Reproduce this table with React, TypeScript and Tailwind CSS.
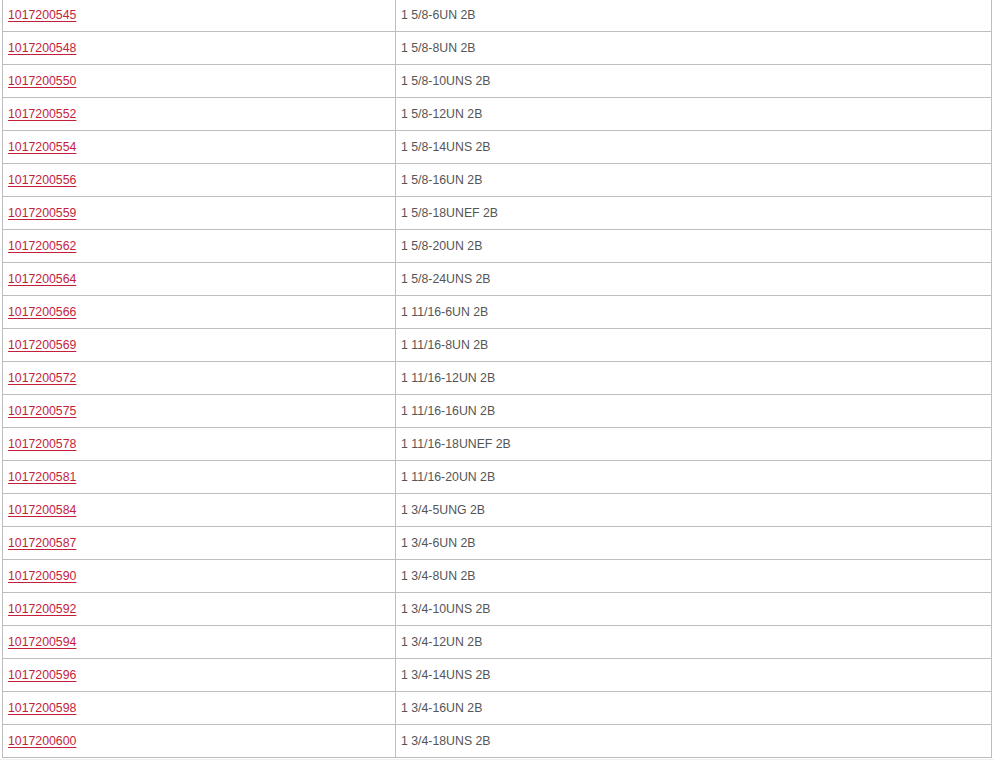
const rows: [string, string][] = [
  ['1017200545', '1 5/8-6UN 2B'],
  ['1017200548', '1 5/8-8UN 2B'],
  ['1017200550', '1 5/8-10UNS 2B'],
  ['1017200552', '1 5/8-12UN 2B'],
  ['1017200554', '1 5/8-14UNS 2B'],
  ['1017200556', '1 5/8-16UN 2B'],
  ['1017200559', '1 5/8-18UNEF 2B'],
  ['1017200562', '1 5/8-20UN 2B'],
  ['1017200564', '1 5/8-24UNS 2B'],
  ['1017200566', '1 11/16-6UN 2B'],
  ['1017200569', '1 11/16-8UN 2B'],
  ['1017200572', '1 11/16-12UN 2B'],
  ['1017200575', '1 11/16-16UN 2B'],
  ['1017200578', '1 11/16-18UNEF 2B'],
  ['1017200581', '1 11/16-20UN 2B'],
  ['1017200584', '1 3/4-5UNG 2B'],
  ['1017200587', '1 3/4-6UN 2B'],
  ['1017200590', '1 3/4-8UN 2B'],
  ['1017200592', '1 3/4-10UNS 2B'],
  ['1017200594', '1 3/4-12UN 2B'],
  ['1017200596', '1 3/4-14UNS 2B'],
  ['1017200598', '1 3/4-16UN 2B'],
  ['1017200600', '1 3/4-18UNS 2B'],
];

export default function App() {
  return (
    <div className="min-h-screen bg-[#f0f0f0] font-['Liberation_Sans',Arial,sans-serif] text-[12.3px] overflow-hidden">
      <div className="bg-white pb-[1px]">
        {/* part list, scrolled so the first row's top edge sits just above view */}
        <div className="-mt-[2px] ml-[2px] mr-[2px] border border-[#bdbdbd] bg-white">
          {rows.map(([code, thread], i) => (
            <div
              key={code}
              className={
                i > 0
                  ? 'grid grid-cols-[392px_1fr] h-[33px] border-t border-[#bdbdbd]'
                  : 'grid grid-cols-[392px_1fr] h-[32px]'
              }
            >
              <div className="flex items-center pl-[5px]">
                <a href="#" className="text-[#c41e3a] underline underline-offset-[2px] decoration-[#c41e3a]">
                  {code}
                </a>
              </div>
              <div className="flex items-center pl-[5px] border-l border-[#bdbdbd] text-[#555555]">
                {thread}
              </div>
            </div>
          ))}
        </div>
      </div>
    </div>
  );
}
